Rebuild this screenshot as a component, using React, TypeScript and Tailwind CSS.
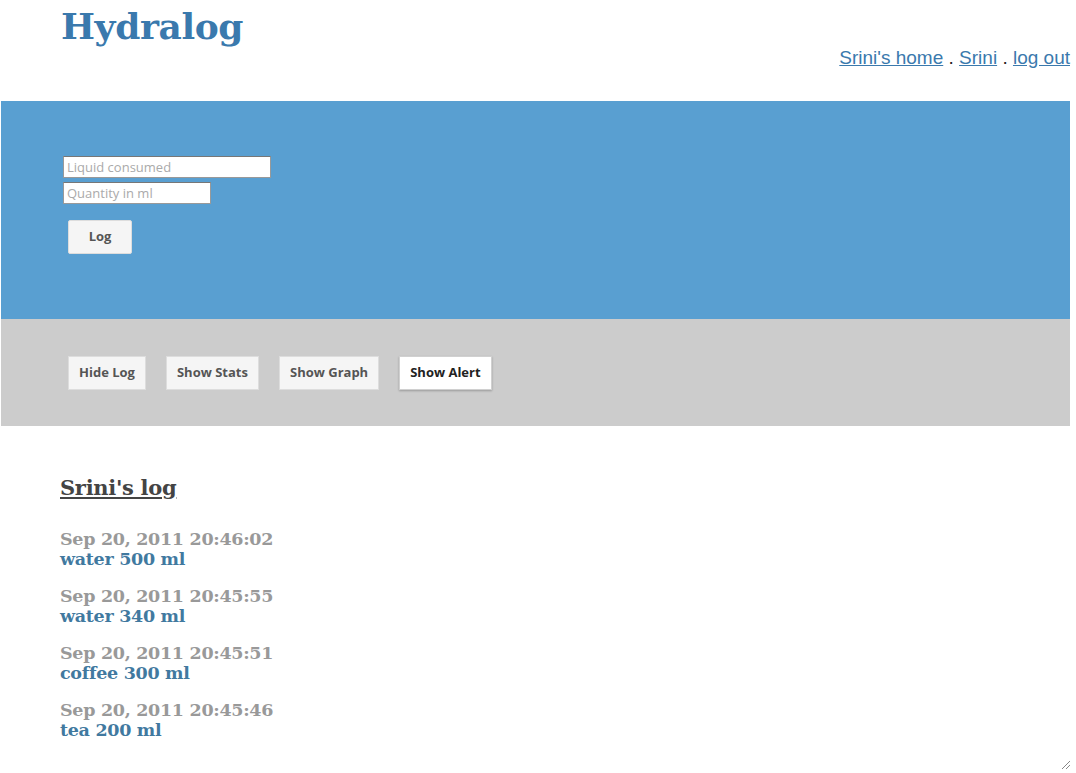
import React from "react";

const entries = [
  ["Sep 20, 2011 20:46:02", "water 500 ml"],
  ["Sep 20, 2011 20:45:55", "water 340 ml"],
  ["Sep 20, 2011 20:45:51", "coffee 300 ml"],
  ["Sep 20, 2011 20:45:46", "tea 200 ml"],
];

function Btn({ children, active }: { children: React.ReactNode; active?: boolean }) {
  return (
    <button
      className={
        "h-[34px] px-[10px] border text-[13px] font-bold font-['Open_Sans',sans-serif] " +
        (active
          ? "bg-white border-[#d0d0d0] text-[#222] shadow-[0_1px_2px_rgba(0,0,0,0.25)]"
          : "bg-[#f5f5f5] border-[#dddddd] text-[#555]")
      }
    >
      {children}
    </button>
  );
}

export default function App() {
  return (
    <div className="relative w-[1076px] h-[773px] bg-white overflow-hidden">
      <div className="flex justify-between items-start h-[101px]">
        <h1 className="ml-[61px] mt-[2px] text-[36px] font-bold text-[#3a79ad] leading-[48px] font-['DejaVu_Serif',serif] tracking-[-0.4px]">
          Hydralog
        </h1>
        <div className="mt-[44px] mr-[6px] text-[19px] text-[#222] font-['Liberation_Sans',sans-serif]">
          <a className="underline text-[#3a79ad]">Srini's home</a> .{" "}
          <a className="underline text-[#3a79ad]">Srini</a> .{" "}
          <a className="underline text-[#3a79ad]">log out</a>
        </div>
      </div>
      <div className="ml-[1px] w-[1069px] h-[218px] bg-[#599fd1] pt-[55px] pl-[62px]">
        <div className="flex flex-col gap-[4px] font-['Open_Sans',sans-serif]">
          <input
            placeholder="Liquid consumed"
            className="w-[208px] h-[22px] bg-white border border-[#999] border-t-[#777] px-[3px] text-[13px] placeholder:text-[#aaa] outline-none"
          />
          <input
            placeholder="Quantity in ml"
            className="w-[148px] h-[22px] bg-white border border-[#999] border-t-[#777] px-[3px] text-[13px] placeholder:text-[#aaa] outline-none"
          />
        </div>
        <div className="mt-[16px] ml-[5px]">
          <button className="w-[64px] h-[34px] bg-[#f5f5f5] border border-[#ddd] rounded-[2px] text-[13px] font-bold text-[#555] font-['Open_Sans',sans-serif]">
            Log
          </button>
        </div>
      </div>
      <div className="ml-[1px] w-[1069px] h-[107px] bg-[#cccccc] flex items-center gap-[20px] pl-[67px]">
        <Btn>Hide Log</Btn>
        <Btn>Show Stats</Btn>
        <Btn>Show Graph</Btn>
        <Btn active>Show Alert</Btn>
      </div>
      <div className="pl-[60px] pt-[47px] font-['DejaVu_Serif',serif]">
        <h2 className="text-[21px] font-bold text-[#444] underline leading-[30px] tracking-[-0.3px]">Srini's log</h2>
        <div className="mt-[26px] flex flex-col gap-[17px]">
          {entries.map(([d, t]) => (
            <div key={d} className="font-bold text-[17.5px] leading-[20px] tracking-[-0.3px]">
              <div className="text-[#999]">{d}</div>
              <div className="text-[#41799f]">{t}</div>
            </div>
          ))}
        </div>
      </div>
      <svg className="absolute right-[6px] bottom-[4px]" width="10" height="10" viewBox="0 0 10 10">
        <line x1="2" y1="10" x2="10" y2="2" stroke="#888" strokeWidth="1" />
        <line x1="6" y1="10" x2="10" y2="6" stroke="#888" strokeWidth="1" />
      </svg>
    </div>
  );
}
